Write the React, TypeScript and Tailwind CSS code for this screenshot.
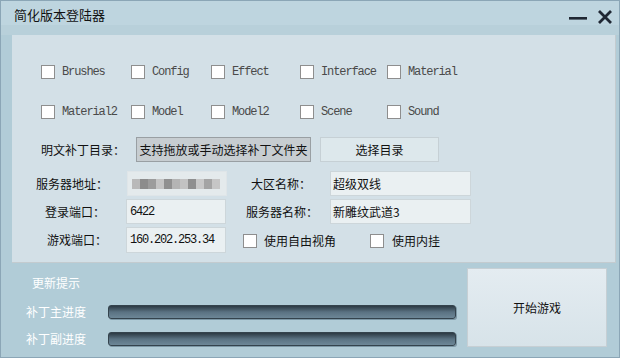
import React from "react";

const cjk = { fontFamily: '"Noto Sans CJK SC", "Noto Sans", sans-serif' };
const mono = { fontFamily: '"Liberation Mono", "DejaVu Sans Mono", monospace' };

function Box() {
  return <div className="w-[14px] h-[14px] border border-[#8e8e8e] bg-white shrink-0" />;
}

function Check({ label, w }: { label: string; w: number }) {
  return (
    <div className="flex items-center gap-[7px] shrink-0" style={{ width: w }}>
      <Box />
      <span className="text-[12px] tracking-[-1.1px] text-[#4a4a4a] leading-none" style={mono}>
        {label}
      </span>
    </div>
  );
}

function Input({ children, w, className = "" }: { children?: React.ReactNode; w: number; className?: string }) {
  return (
    <div
      className={"h-[25px] bg-[#eaf0f2] border border-[#cdd6da] flex items-center pl-[2px] text-[12px] text-[#111] " + className}
      style={{ width: w }}
    >
      {children}
    </div>
  );
}

function Blur() {
  const blocks = ["#b9b9b9", "#8c8c8c", "#9c9c9c", "#c4c4c4", "#909090", "#b4b4b4", "#c2c2c2", "#8f8f8f", "#c8c8c8", "#a4a4a4", "#c6c6c6"];
  return (
    <div className="h-[25px] w-[100px] bg-[#e4eaec] border border-[#dfe5e8] flex items-center pl-[4px]">
      <div className="flex h-[10px] blur-[0.6px]">
        {blocks.map((c, i) => (
          <div key={i} className="w-[8px] h-[10px]" style={{ background: c }} />
        ))}
      </div>
    </div>
  );
}

function Bar() {
  return (
    <div className="w-[348px] h-[14px] rounded-[3px] border border-[#34434d] bg-gradient-to-b from-[#2c3a44] via-[#5a7282] to-[#6d8797] shadow-[1px_1px_0_#7d98a6]" />
  );
}

export default function App() {
  return (
    <div className="w-[620px] h-[358px] bg-[#b1ccd7] border border-[#8ba6b6] flex flex-col overflow-hidden" style={cjk}>
      {/* title bar */}
      <div className="h-[24px] bg-[#bed5df] flex items-center shrink-0">
        <span className="ml-[13px] mt-[2px] text-[13px] text-[#111] leading-none">简化版本登陆器</span>
        <div className="ml-auto mr-[6px] mt-[8px] flex items-center gap-[10px]">
          <svg width="18" height="16" viewBox="0 0 18 16">
            <rect x="0" y="8" width="18" height="2.6" fill="#1f2733" />
          </svg>
          <svg width="16" height="16" viewBox="0 0 16 16">
            <path d="M2 2 L14 14 M14 2 L2 14" stroke="#1f2733" strokeWidth="2.8" strokeLinecap="butt" />
          </svg>
        </div>
      </div>
      <div className="h-[10px] bg-[#b8d0da] shrink-0" />

      {/* main panel */}
      <div className="ml-[11px] w-[604px] h-[228px] bg-[#d3e0e7] border-r border-b border-[#c3cbcf] shrink-0 flex flex-col pl-[29px] text-[12px] text-[#111]">
        <div className="flex mt-[30px] h-[14px] items-center">
          <Check label="Brushes" w={90} />
          <Check label="Config" w={80} />
          <Check label="Effect" w={89} />
          <Check label="Interface" w={87} />
          <Check label="Material" w={100} />
        </div>
        <div className="flex mt-[26px] h-[14px] items-center">
          <Check label="Material2" w={90} />
          <Check label="Model" w={80} />
          <Check label="Model2" w={89} />
          <Check label="Scene" w={87} />
          <Check label="Sound" w={100} />
        </div>
        <div className="flex mt-[18px] h-[25px] items-center">
          <span className="w-[95px]">明文补丁目录：</span>
          <div className="w-[175px] h-[25px] bg-[#c7cdd1] border border-[#999fa3] flex items-center justify-center">
            支持拖放或手动选择补丁文件夹
          </div>
          <div className="ml-[9px] w-[119px] h-[25px] bg-[#dde8ec] border border-[#c6d0d5] flex items-center justify-center">
            选择目录
          </div>
        </div>
        <div className="flex mt-[9px] h-[25px] items-center -ml-[6px]">
          <span className="w-[92px] pl-[1px]">服务器地址：</span>
          <Blur />
          <span className="ml-[24px] w-[79px]">大区名称：</span>
          <Input w={141}>超级双线</Input>
        </div>
        <div className="flex mt-[3px] h-[25px] items-center -ml-[6px]">
          <span className="w-[92px] pl-[10px]">登录端口：</span>
          <Input w={100} className="-ml-[1px]">
            <span style={mono} className="text-[12px] tracking-[-1.2px] pl-[1px]">6422</span>
          </Input>
          <span className="ml-[20px] w-[84px]">服务器名称：</span>
          <Input w={141}>新雕纹武道3</Input>
        </div>
        <div className="flex mt-[3px] h-[26px] items-center -ml-[6px]">
          <span className="w-[92px] pl-[12px]">游戏端口：</span>
          <Input w={100} className="-ml-[1px] h-[26px]">
            <span style={mono} className="text-[12px] tracking-[-1.2px] pl-[1px]">160.202.253.34</span>
          </Input>
          <div className="ml-[17px] mt-[2px] flex items-center gap-[7px] w-[127px]">
            <Box />
            <span>使用自由视角</span>
          </div>
          <div className="mt-[2px] flex items-center gap-[8px]">
            <Box />
            <span>使用内挂</span>
          </div>
        </div>
      </div>

      {/* bottom */}
      <div className="flex flex-1">
        <div className="flex flex-col w-[466px] text-white text-[12px]">
          <div className="mt-[12px] ml-[31px] h-[16px] leading-[16px]">更新提示</div>
          <div className="mt-[13px] flex items-center h-[16px]">
            <span className="ml-[25px] w-[82px]">补丁主进度</span>
            <Bar />
          </div>
          <div className="mt-[11px] flex items-center h-[16px]">
            <span className="ml-[25px] w-[82px]">补丁副进度</span>
            <Bar />
          </div>
        </div>
        <div className="mt-[5px] w-[140px] h-[79px] bg-gradient-to-b from-[#e4ecf1] to-[#d7e3e9] border border-[#c6cfd4] flex items-center justify-center text-[12px] text-[#111]">
          开始游戏
        </div>
      </div>
    </div>
  );
}
